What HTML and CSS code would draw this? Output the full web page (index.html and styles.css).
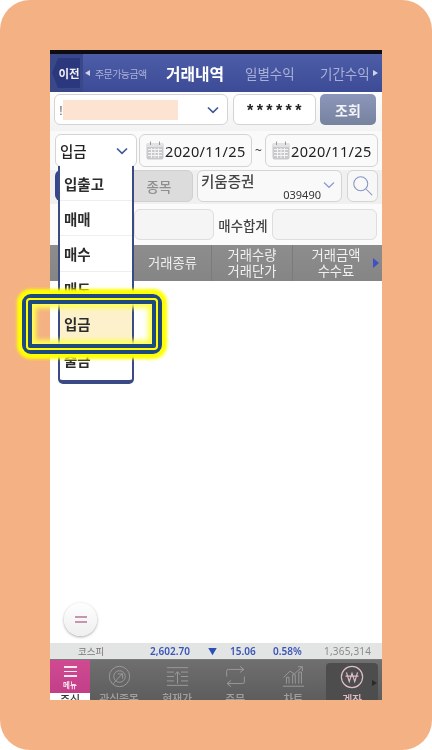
FILE: index.html
```html
<!DOCTYPE html>
<html lang="ko">
<head>
<meta charset="utf-8">
<title>거래내역</title>
<link rel="stylesheet" href="styles.css">
</head>
<body>
<div class="frame">
  <div class="phone">
    <div class="statusbar"></div>
    <header class="nav">
      <div class="back"><span>이전</span></div>
      <div class="nav-item nav-side"><i class="tri-l"></i>주문가능금액</div>
      <div class="nav-item nav-active">거래내역</div>
      <div class="nav-item nav-mid">일별수익</div>
      <div class="nav-item nav-last">기간수익<i class="tri-r"></i></div>
    </header>

    <div class="row row-account">
      <div class="field account">
        <span class="acc-mark">!</span><span class="acc-mask"></span>
        <svg class="chev" viewBox="0 0 12 8"><path d="M1 1.5 L6 6.3 L11 1.5"/></svg>
      </div>
      <div class="field pwd">******</div>
      <div class="query">조회</div>
    </div>

    <div class="row row-date">
      <div class="field kind"><span>입금</span>
        <svg class="chev" viewBox="0 0 12 8"><path d="M1 1.5 L6 6.3 L11 1.5"/></svg>
      </div>
      <div class="field date">
        <svg class="cal" viewBox="0 0 18 19"><rect x="0.5" y="2" width="17" height="16.5" rx="2" fill="#c9c9cd"/><rect x="0.5" y="2" width="17" height="4" rx="1.5" fill="#e2e2e4"/><path d="M4.5 0.5V4M13.5 0.5V4" stroke="#999" fill="none"/><path d="M2 8.5H16M2 11.5H16M2 14.5H16M5.5 7V17M9 7V17M12.5 7V17" stroke="#f3f3f3" fill="none"/></svg>
        <span>2020/11/25</span>
      </div>
      <span class="tilde">~</span>
      <div class="field date">
        <svg class="cal" viewBox="0 0 18 19"><rect x="0.5" y="2" width="17" height="16.5" rx="2" fill="#c9c9cd"/><rect x="0.5" y="2" width="17" height="4" rx="1.5" fill="#e2e2e4"/><path d="M4.5 0.5V4M13.5 0.5V4" stroke="#999" fill="none"/><path d="M2 8.5H16M2 11.5H16M2 14.5H16M5.5 7V17M9 7V17M12.5 7V17" stroke="#f3f3f3" fill="none"/></svg>
        <span>2020/11/25</span>
      </div>
    </div>

    <div class="row row-stock">
      <div class="all-tab"></div>
      <div class="stock-btn">종목</div>
      <div class="field stock">
        <span class="stock-name">키움증권</span>
        <span class="stock-code">039490</span>
        <svg class="chev chev-light" viewBox="0 0 12 8"><path d="M1 1.5 L6 6.3 L11 1.5"/></svg>
      </div>
      <div class="field search">
        <svg viewBox="0 0 24 24"><circle cx="10" cy="10" r="8"/><path d="M16 16 L23 23"/></svg>
      </div>
    </div>

    <div class="row row-sum">
      <div class="sum-box sum-first"></div>
      <span class="sum-label">매수합계</span>
      <div class="sum-box sum-second"></div>
    </div>

    <div class="thead">
      <div class="th th-1"></div>
      <div class="th th-2">거래종류</div>
      <div class="th th-3">거래수량<br>거래단가</div>
      <div class="th th-4">거래금액<br>수수료<i class="tri-more"></i></div>
    </div>

    <main class="tbody">
      <div class="fab"><i></i><i></i></div>
    </main>

    <div class="ticker">
      <span class="t-name">코스피</span>
      <span class="t-val">2,602.70</span>
      <span class="t-arrow">▼</span>
      <span class="t-chg">15.06</span>
      <span class="t-pct">0.58%</span>
      <span class="t-vol">1,365,314</span>
    </div>

    <nav class="tabs">
      <div class="menu">
        <div class="menu-top"><i></i><i></i><i></i><span>메뉴</span></div>
        <div class="menu-bottom">주식</div>
      </div>
      <div class="tab">
        <svg viewBox="0 0 26 26"><circle cx="13" cy="13" r="11.5"/><circle cx="13" cy="13" r="6.5"/><path d="M6 21 L16 10 M11 10 H16.5 V15.5"/></svg>
        <span>관심종목</span>
      </div>
      <div class="tab">
        <svg viewBox="0 0 26 26"><path d="M1 3H25M1 8H9M17 8H25M1 13H9M17 13H25M1 18H9M17 18H25M1 23H25M13 21V8M10 11 L13 7.5 L16 11"/></svg>
        <span>현재가</span>
      </div>
      <div class="tab">
        <svg viewBox="0 0 26 26"><path d="M3 13V7 Q3 5 5 5H22M18 1.5 L22.5 5 L18 8.5M23 13V19 Q23 21 21 21H4M8 17.5 L3.5 21 L8 24.5"/></svg>
        <span>주문</span>
      </div>
      <div class="tab">
        <svg viewBox="0 0 26 26"><path d="M1 24H25M5 21V14H8V21M12 21V11H15V21M19 21V8H22V21M2 14 L9 7 L14 10 L23 2M18 2H23V7"/></svg>
        <span>차트</span>
      </div>
      <div class="tab tab-active">
        <svg viewBox="0 0 26 26"><circle cx="13" cy="13" r="11.5"/><path d="M7 8 L10 18 L13 9 L16 18 L19 8M6 12H20"/></svg>
        <span>계좌</span>
        <i class="tri-tab"></i>
      </div>
    </nav>

    <ul class="dropdown">
      <li>입출고</li>
      <li>매매</li>
      <li>매수</li>
      <li>매도</li>
      <li class="selected">입금</li>
      <li>출금</li>
    </ul>
  </div>
  <div class="callout"><div class="callout-inner"></div></div>
</div>
</body>
</html>
```
FILE: styles.css
```css
* { box-sizing: border-box; }
html, body { margin: 0; padding: 0; background: #fff; }
body {
  width: 432px;
  height: 750px;
  overflow: hidden;
  font-family: "Noto Sans CJK KR", "Noto Sans", sans-serif;
}
.frame {
  position: relative;
  width: 432px;
  height: 750px;
  padding: 50px;
  background: #f4b183;
  border-radius: 30px;
}
.phone {
  position: relative;
  width: 332px;
  height: 650px;
  overflow: hidden;
  background: #fff;
  display: flex;
  flex-direction: column;
  filter: blur(0.35px);
}
.statusbar { height: 4px; background: #0c0c12; flex: none; }

/* header */
.nav {
  height: 38px;
  flex: none;
  display: flex;
  align-items: center;
  background: linear-gradient(#4d5da8, #3d4b96);
  color: #a9b1d8;
  position: relative;
}
.back {
  width: 33px;
  height: 38px;
  background: #3a4788;
  display: flex;
  align-items: center;
  padding-left: 2px;
  flex: none;
}
.back span {
  height: 30px;
  width: 28px;
  background: #2c387e;
  clip-path: polygon(22% 0, 100% 0, 100% 100%, 22% 100%, 0 50%);
  display: flex;
  align-items: center;
  justify-content: center;
  padding-left: 6px;
  color: #f2f2f8;
  font-size: 11.5px;
  font-weight: 700;
  white-space: nowrap;
}
.nav-item { white-space: nowrap; display: flex; align-items: center; }
.nav-side { font-size: 10px; width: 83px; padding-left: 2px; letter-spacing: -0.6px; }
.nav-active { color: #fff; font-size: 15.8px; font-weight: 700; width: 79px; }
.nav-mid { font-size: 13.5px; width: 75px; }
.nav-last { font-size: 13.5px; }
.tri-l, .tri-r { display: inline-block; border: 3.5px solid transparent; }
.tri-l { border-right: 5px solid #cfd4ea; border-left: 0; margin-right: 5px; }
.tri-r { border-left: 5px solid #cfd4ea; border-right: 0; margin-left: 3px; }

/* form rows */
.row { display: flex; align-items: center; flex: none; }
.field {
  background: #fff;
  border: 1px solid #d4d4d4;
  border-radius: 6px;
  display: flex;
  align-items: center;
  position: relative;
  color: #222;
}
.row-account {
  height: 39px;
  background: linear-gradient(#fdfdfd, #f3f3f3);
  padding: 0 0 4px 4px;
}
.account { width: 174px; height: 31px; padding-left: 4px; }
.acc-mark { font-size: 12px; width: 4px; color: #555; }
.acc-mask { width: 115px; height: 20px; background: #fde3d2; }
.chev { width: 12px; height: 8px; fill: none; stroke: #3f5a94; stroke-width: 1.7; position: absolute; right: 8px; top: 50%; margin-top: -4px; }
.pwd {
  width: 83px;
  height: 31px;
  margin-left: 5px;
  justify-content: center;
  font-size: 16px;
  font-weight: 700;
  letter-spacing: 3.4px;
  padding-left: 3px;
  font-family: "Liberation Sans", sans-serif;
  padding-top: 3px;
}
.query {
  width: 56px;
  height: 31px;
  margin-left: 4px;
  border-radius: 5px;
  background: linear-gradient(#8c96ba, #77829f);
  color: #f4f4f8;
  font-size: 14px;
  font-weight: 700;
  display: flex;
  align-items: center;
  justify-content: center;
}
.row-date {
  height: 39px;
  background: #fafafa;
  padding: 0 0 0 5px;
}
.kind { width: 82px; height: 33px; padding-left: 4px; font-size: 14.5px; font-weight: 500; }
.date {
  width: 113px;
  height: 33px;
  padding-left: 6px;
  font-size: 14.5px;
  font-family: "Noto Sans", sans-serif;
  letter-spacing: 0.35px;
  background: #fafafa;
}
.kind + .date { margin-left: 2px; }
.cal { width: 18px; height: 19px; flex: none; margin-right: 1px; }
.tilde { width: 13px; text-align: center; font-size: 12px; color: #333; font-family: "Noto Sans", sans-serif; }
.row-stock {
  height: 34px;
  background: #f0f0f0;
  padding: 0 0 3px 5px;
}
.all-tab { width: 70px; height: 31px; background: #33478a; border-radius: 6px 0 0 6px; }
.stock-btn {
  width: 68px;
  height: 32px;
  background: #dcdcdc;
  border-radius: 6px;
  border: 1px solid #d0d0d0;
  color: #8e8e8e;
  font-size: 13.5px;
  font-weight: 500;
  display: flex;
  align-items: center;
  justify-content: center;
}
.stock { width: 145px; height: 32px; margin-left: 4px; background: #f9f9f9; }
.stock-name { position: absolute; left: 3px; top: 1px; font-size: 14.5px; font-weight: 500; line-height: 18px; color: #444; }
.stock-code { position: absolute; right: 20px; bottom: 0; font-size: 11px; line-height: 13px; font-family: "Noto Sans", sans-serif; color: #333; }
.chev-light { stroke: #8d9ccb; right: 6px; margin-top: -5px; stroke-width: 1.2; }
.search { width: 31px; height: 32px; margin-left: 5px; justify-content: center; background: #f7f7f7; }
.search svg { width: 21px; height: 21px; fill: none; stroke: #8896bf; stroke-width: 1.2; }
.row-sum {
  height: 41px;
  background: #fbfbfb;
  padding: 0 0 0 84px;
}
.sum-box { height: 31px; background: #f5f5f5; border: 1px solid #dedede; border-radius: 6px; }
.sum-first { width: 80px; }
.sum-second { width: 105px; }
.sum-label { width: 58px; text-align: center; font-size: 13.4px; font-weight: 500; color: #444; white-space: nowrap; }

/* table head */
.thead {
  height: 36px;
  flex: none;
  display: flex;
  background: linear-gradient(#8d8d8d, #858585);
  color: #f0f0f0;
  font-size: 13.3px;
  line-height: 16px;
  text-align: center;
}
.th {
  display: flex;
  align-items: center;
  justify-content: center;
  border-right: 1px solid #7b7b7b;
  position: relative;
}
.th-1 { width: 84px; }
.th-2 { width: 78px; }
.th-3 { width: 81px; }
.th-4 { width: 89px; border-right: 0; padding-right: 3px; }
.tri-more { position: absolute; right: 3px; top: 13px; border: 5px solid transparent; border-left: 6px solid #3e52c8; border-right: 0; }

/* body */
.tbody { flex: 1; background: #fff; position: relative; }
.fab {
  position: absolute;
  left: 14px;
  bottom: 7px;
  width: 33px;
  height: 33px;
  border-radius: 50%;
  background: linear-gradient(#fefefe, #efefef);
  box-shadow: 0 1px 3px rgba(0,0,0,0.35);
  display: flex;
  flex-direction: column;
  gap: 3px;
  align-items: center;
  justify-content: center;
}
.fab i { width: 12px; height: 2px; background: #c696ac; }

/* ticker */
.ticker {
  height: 17px;
  flex: none;
  background: #e3e5e5;
  position: relative;
  display: flex;
  align-items: center;
  font-size: 10px;
  font-family: "Noto Sans", "Noto Sans CJK KR", sans-serif;
  color: #3a55b8;
  font-weight: 600;
  border-bottom: 1px solid #7a7a7a;
}
.t-name { width: 100px; padding-left: 28px; color: #777; font-weight: 400; font-family: "Noto Sans CJK KR", sans-serif; font-size: 9.5px; }
.t-val { width: 58px; }
.t-arrow { width: 22px; color: #2a50b8; font-size: 9px; }
.t-chg { width: 43px; }
.t-pct { width: 51px; }
.t-vol { color: #8a8a8a; font-weight: 400; letter-spacing: 0.2px; }

/* bottom tabs */
.tabs {
  height: 40px;
  flex: none;
  display: flex;
  background: linear-gradient(#6f6f6f, #5d5d5d);
  overflow: hidden;
}
.menu { width: 40px; flex: none; display: flex; flex-direction: column; overflow: hidden; }
.menu-top {
  height: 33px;
  flex: none;
  background: linear-gradient(#cf4a91, #c23f88);
  display: flex;
  flex-direction: column;
  align-items: center;
  padding-top: 6px;
  gap: 3px;
}
.menu-top i { width: 13px; height: 1.6px; background: #f7e8f0; flex: none; }
.menu-top span { color: #fff; font-size: 7.5px; line-height: 10px; font-weight: 500; }
.menu-bottom { flex: none; height: 13px; background: #fff; color: #333; font-size: 11px; line-height: 13px; text-align: center; font-weight: 500; }
.tab {
  width: 58px;
  flex: none;
  display: flex;
  flex-direction: column;
  align-items: center;
  padding-top: 5px;
  color: #a0a0a0;
  font-size: 11px;
  line-height: 13px;
  font-weight: 500;
  position: relative;
}
.tab svg { width: 23px; height: 23px; flex: none; fill: none; stroke: #9a9a9a; stroke-width: 1.1; margin-bottom: 4px; }
.tab span { white-space: nowrap; letter-spacing: -0.3px; }
.tab-active {
  margin: 3px 0 0 4px;
  width: 52px;
  padding-top: 2px;
  background: #4d4d4d;
  border-radius: 4px 4px 0 0;
  color: #e0bcc8;
}
.tab-active svg { stroke: #e0bcc8; width: 24px; height: 24px; stroke-width: 1.3; }
.tri-tab { position: absolute; right: 1px; top: 17px; border: 3.5px solid transparent; border-left: 5px solid #2a2a2a; border-right: 0; }

/* dropdown */
.dropdown {
  position: absolute;
  left: 8px;
  top: 116px;
  width: 76px;
  height: 218px;
  margin: 0;
  padding: 0;
  list-style: none;
  background: #fff;
  border: 2px solid #3a4a85;
  border-top: 0;
  border-bottom: 4px solid #3a4a85;
  border-radius: 0 0 5px 5px;
}
.dropdown li {
  height: 35.2px;
  border-bottom: 1px solid #eeeeee;
  display: flex;
  align-items: center;
  padding-left: 4px;
  font-size: 14.5px;
  font-weight: 700;
  color: #2c2c2c;
}
.dropdown li:last-child { border-bottom: 0; }
.dropdown .selected { background: #fdf1cc; }

/* callout */
.callout {
  position: absolute;
  left: 22px;
  top: 294px;
  width: 140px;
  height: 60px;
  border: 4.5px solid #1f4a80;
  border-radius: 9px;
  padding: 2px;
  box-shadow: 0 0 3px 5px #ffff00;
  display: flex;
}
.callout-inner {
  flex: 1;
  border: 4px solid #1f4a80;
  border-radius: 2px;
  box-shadow: 0 0 0 2px #ffff00, inset 0 0 5px 4px #ffff50;
}
```
